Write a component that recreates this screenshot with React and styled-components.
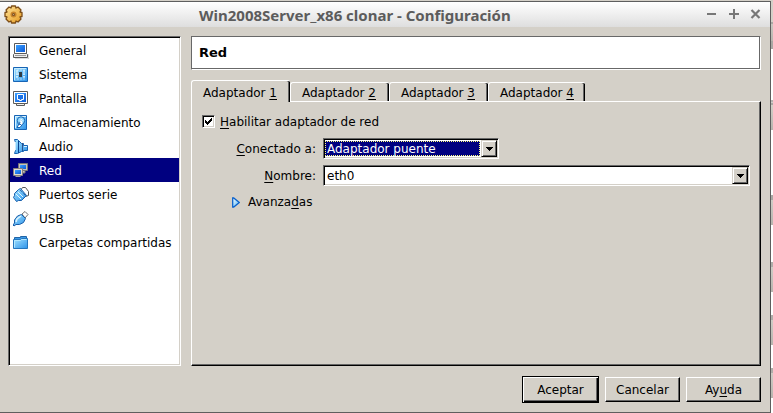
import React from "react";
import styled, { createGlobalStyle, css } from "styled-components";

const GlobalStyle = createGlobalStyle`
  * { box-sizing: border-box; }
  body {
    margin: 0;
    background: #d4d0c8;
    color: #000;
    font: 12px/16px "DejaVu Sans", sans-serif;
    overflow: hidden;
  }
`;

const FACE = "#d4d0c8";

const sunken = css`
  border: 1px solid;
  border-color: #686868 #fff #fff #686868;
  box-shadow: inset 1px 1px #000, inset -1px -1px ${FACE};
`;
const raised = css`
  border: 1px solid;
  border-color: #fff #000 #000 #fff;
  box-shadow: inset -1px -1px #666;
`;

const Desktop = styled.div`
  display: flex;
  width: 773px;
  height: 413px;
  padding-top: 1px;
`;
const Window = styled.main`
  display: flex;
  flex-direction: column;
  width: 771px;
  height: 412px;
  border: solid #5e5e5e;
  border-width: 1px 1px 1px 0;
  background: ${FACE};
`;
const Backdrop = styled.div`
  width: 2px;
  height: 412px;
  background: linear-gradient(
    #d4d0c8 0 21px, #aaa8a4 21px 23px, #cbc8c1 23px, #b9b5af 40px, #aaa8a4 40px 48px,
    #fff 48px 99px, #b5b3b0 99px 101px, #d0ceca 101px 102px, #aaa8a4 102px 104px, #d4d0c8 104px, #b8b4ae 129px,
    #fff 129px 194px, #aaa8a4 194px 199px, #d0cdc6 199px, #b8b4ae 224px,
    #fff 224px 261px, #b0aeaa 261px 266px, #d0cdc6 266px, #b8b4ae 291px,
    #fff 291px 314px, #b0aeaa 314px 319px, #d0cdc6 319px, #b8b4ae 344px,
    #fff 344px 367px, #b0aeaa 367px 372px, #d0cdc6 372px, #b8b4ae 397px,
    #fff 397px
  );
`;
const TitleBar = styled.header`
  display: flex;
  align-items: center;
  height: 25px;
  padding: 0 9px 0 4px;
  background: linear-gradient(#fff, #dedede);
`;
const Title = styled.h1`
  flex: 1;
  margin: 0 0 0 176px;
  color: #5c5c5c;
  font: bold 15px/22px "Noto Sans", sans-serif;
  white-space: nowrap;
`;
const TitleText = styled.span`
  display: inline-block;
  transform-origin: left center;
`;
const Columns = styled.div`
  display: flex;
  gap: 10px;
  padding: 9px 9px 0 8px;
`;
const Sidebar = styled.nav`
  ${sunken}
  width: 173px;
  height: 330px;
  padding: 1px;
  background: #fff;
`;
const NavItem = styled.div`
  display: flex;
  align-items: center;
  gap: 10px;
  height: 24px;
  padding: 1px 0 0 3px;
  white-space: nowrap;
  color: ${(p) => (p.$active ? "#fff" : "#000")};
  background: ${(p) => (p.$active ? "#000080" : "#fff")};
`;
const Icon = styled.svg`
  display: block;
  flex: none;
  margin-top: ${(p) => p.$lift || 0}px;
`;
const Content = styled.section`
  width: 570px;
`;
const PageHeading = styled.h2`
  height: 34px;
  margin: 0 0 10px;
  padding: 0 0 0 7px;
  border: 1px solid;
  border-color: #686868 #fff #fff #686868;
  box-shadow: inset -1px -1px #686868;
  background: #fff;
  font: bold 13px/32px "DejaVu Sans", sans-serif;
`;
const TabBar = styled.div`
  display: flex;
  align-items: flex-end;
  height: 21px;
`;
const Tab = styled.button`
  width: ${(p) => p.$width}px;
  height: ${(p) => (p.$active ? 22 : 19)}px;
  margin-bottom: ${(p) => (p.$active ? -1 : 0)}px;
  padding: ${(p) => (p.$active ? "3px 0 0 11px" : "1px 0 0 11px")};
  border: 0;
  border-top: 1px solid #fff;
  border-left: 1px solid #fff;
  border-radius: 3px 2px 0 0;
  box-shadow: inset -1px 0 #000, inset -2px 0 #666;
  background: ${FACE};
  font: inherit;
  text-align: left;
  white-space: nowrap;
  z-index: ${(p) => (p.$active ? 1 : 0)};
`;
const TabPane = styled.div`
  ${raised}
  height: 265px;
  padding: 11px 10px;
`;
const Key = styled.span`
  text-decoration: underline;
  text-decoration-thickness: 1px;
  text-decoration-skip-ink: none;
  text-underline-offset: 2px;
`;
const CheckRow = styled.label`
  display: flex;
  align-items: center;
  gap: 5px;
  height: 17px;
`;
const CheckBox = styled.span`
  ${sunken}
  width: 13px;
  height: 13px;
  padding: 1px;
  background: #fff;
`;
const FormRow = styled.div`
  display: flex;
  align-items: center;
  height: 21px;
  margin-top: ${(p) => p.$gap}px;
`;
const FieldLabel = styled.label`
  width: 121px;
  padding-right: 7px;
  text-align: right;
  white-space: nowrap;
`;
const Combo = styled.div`
  ${sunken}
  display: flex;
  width: ${(p) => p.$width}px;
  height: 21px;
  padding: 1px;
  background: #fff;
`;
const ComboValue = styled.span`
  flex: 1;
  height: 15px;
  margin: 1px 1px 1px 0;
  padding-left: 1px;
  border: 1px ${(p) => (p.$focused ? "dotted #ffff7f" : "solid transparent")};
  line-height: 15px;
  color: ${(p) => (p.$focused ? "#fff" : "#000")};
  background: ${(p) => (p.$focused ? "#000080" : "#fff")};
`;
const ComboArrow = styled.span`
  display: flex;
  align-items: center;
  justify-content: center;
  width: 16px;
  height: 17px;
  border: 1px solid;
  border-color: ${FACE} #000 #000 ${FACE};
  box-shadow: inset 1px 1px #fff, inset -1px -1px #666;
  background: ${FACE};
`;
const Expander = styled.div`
  display: flex;
  align-items: center;
  gap: 8px;
  margin: 8px 0 0 30px;
`;
const Footer = styled.footer`
  display: flex;
  justify-content: flex-end;
  align-items: center;
  gap: 6px;
  height: 27px;
  margin: 10px 9px 0 0;
`;
const Push = styled.button`
  ${raised}
  width: 75px;
  height: 25px;
  padding: 0;
  background: ${FACE};
  font: inherit;
  ${(p) =>
    p.$primary &&
    css`
      width: 77px;
      height: 27px;
      border-color: #000;
      box-shadow: inset 1px 1px #fff, inset -1px -1px #000, inset -2px -2px #666;
    `}
`;

const Blues = () => (
  <svg width="0" height="0" style={undefined} aria-hidden="true" display="none">
    <defs />
  </svg>
);

const Gradient = ({ id, from = "#8fd8ff", to = "#1466dc" }) => (
  <linearGradient id={id} x1="0" y1="0" x2="1" y2="1">
    <stop offset="0" stopColor={from} />
    <stop offset="1" stopColor={to} />
  </linearGradient>
);

const ICONS = {
  general: (
    <>
      <path d="M2 16h14v-5" stroke="#bbb" fill="none" />
      <path d="M1.5.5h12v10h-12z" fill="#fff" stroke="#5a5a5a" />
      <path d="M3 2h9v7H3z" fill="url(#g-general)" />
      <path d="M1.5 10.5h12l1 1v3H.5v-3z" fill="#eee" stroke="#5a5a5a" />
      <path d="M2 12.5h11" stroke="#999" />
    </>
  ),
  sistema: (
    <>
      <path d="M.5.5h14v14H.5z" fill="url(#g-sistema)" stroke="#1764b5" />
      <path d="M1.5 13V1.5H13" stroke="#c5ecff" fill="none" />
      <path d="M3 4h2m-2 3h3m-3 3h2m5-6h2m-2 3h2m-2 3h2M5 2.5v1m3-1v1m3-1v1m-6 8v1m3-1v1m3-1v1" stroke="#fff" />
      <path d="M6 5h3v5H6z" fill="#303a44" />
      <path d="M4 5v5m7-5v5" stroke="#e8f7ff" strokeDasharray="1 1" />
    </>
  ),
  pantalla: (
    <>
      <path d="M.5.5h14v12H.5z" fill="#fff" stroke="#5a5a5a" />
      <path d="M2 2h11v9H2z" fill="url(#g-pantalla)" />
      <path d="M4.5 3.5h6v5h-2v1h-2v-1h-2z" fill="#1870e6" stroke="#fff" />
      <path d="M3.5 12.5h8v2h-8z" fill="#eee" stroke="#5a5a5a" />
    </>
  ),
  almacenamiento: (
    <>
      <path d="M1.5.5h12v14h-12z" fill="url(#g-almacenamiento)" stroke="#1764b5" />
      <path d="M2.5 13V1.5H13" stroke="#d7f2ff" fill="none" />
      <circle cx="8" cy="5.5" r="3.7" fill="#9adcff" stroke="#1764b5" />
      <path d="M4.5 7.5Q5 10 8 9.5M8 5.5l-4 7h3l3-4" fill="#fff" stroke="#1764b5" />
      <path d="M7 5.5q2-2 2 0t-2 1" stroke="#fff" fill="none" />
    </>
  ),
  audio: (
    <>
      <path d="M1.5.5h3l4 4h2v2h4v5h-4v1h-2l-4 2h-3l1-3v-8z" fill="url(#g-audio)" stroke="#1764b5" />
      <path d="M5.5 2v12" stroke="#0a438e" />
      <path d="M2.5 3v8" stroke="#c7ebff" />
      <path d="M9.5 4v8" stroke="#28528d" />
      <path d="M11 7.5h3" stroke="#d8f3ff" />
    </>
  ),
  red: (
    <>
      <path d="M5.5.5h9v7h-9zM8 8v2h4V8" fill="#c7c1bb" stroke="#777" />
      <path d="M7 2h6v4H7z" fill="url(#g-red)" />
      <path d="M.5 5.5h9v7h-9z" fill="#e1dcd6" stroke="#85807c" />
      <path d="M2 7h6v4H2z" fill="url(#g-red)" />
      <path d="M2.5 13.5h5" stroke="#a39f9b" />
    </>
  ),
  serie: (
    <>
      <path d="M9.5.5h3l3 4v4l-3 1-5-6z" fill="#fff" stroke="#555" />
      <path d="M5.5 2.5l2-1 6 7-5 5h-3l-2 1-3-4 1-2v-2z" fill="url(#g-serie)" stroke="#195eaa" />
      <path d="M3 7l5 5M5 5l5 5" stroke="#e3f7ff" />
      <path d="M7 3l6 6" stroke="#174d8d" strokeDasharray="1 1" />
    </>
  ),
  usb: (
    <>
      <path d="M9 3l3-2.5 3 3-3 3.5z" fill="#fff" stroke="#737373" />
      <path d="M8.5 3.5l4 4-2 4-4 2H3l-2 1.5-1-1L1.500 12V9l3-4z" fill="url(#g-usb)" stroke="#195eaa" />
      <path d="M3 11l1-3 4-3" fill="none" stroke="#dcf4ff" strokeWidth="1.500" />
    </>
  ),
  carpetas: (
    <>
      <path d="M1.500 13.500V2.500h6v-1h6v12z" fill="#3b9ae8" stroke="#2264a6" />
      <path d="M.5 4.500h7l1-1h6v10H.5z" fill="url(#g-carpetas)" stroke="#2475bd" />
      <path d="M1.500 12.500v-7h6l1-1h5" fill="none" stroke="#b2e8ff" />
    </>
  ),
};

const NavIcon = ({ name }) => (
  <Icon width="16" height="16" viewBox="0 0 16 16" aria-hidden="true">
    <defs>
      <Gradient
        id={`g-${name}`}
        from={["general", "pantalla", "red"].includes(name) ? "#3ba0ff" : "#a5e4ff"}
        to={["general", "pantalla", "red"].includes(name) ? "#0c5ad8" : "#2c92ea"}
      />
    </defs>
    {ICONS[name]}
  </Icon>
);

const Gear = () => (
  <Icon width="19" height="19" viewBox="0 0 19 19" aria-hidden="true" $lift={-1}>
    <defs>
      <Gradient id="gold" from="#ffe49a" to="#e59a20" />
    </defs>
    <path
      d="M7.500 1h4l.5 2 2-1 3 3-1 2 2 .5v4l-2 .5 1 2-3 3-2-1-.5 2h-4l-.5-2-2 1-3-3 1-2-2-.5v-4l2-.5-1-2 3-3 2 1z"
      fill="url(#gold)"
      stroke="#7d4d16"
      strokeWidth="1.300"
      strokeLinejoin="round"
    />
    <circle cx="9.500" cy="9.500" r="3" fill="#c8842a" />
    <circle cx="9.500" cy="9.500" r="1.500" fill="#7b522a" />
    <circle cx="9.500" cy="9.500" r=".6" fill="#d9b475" />
  </Icon>
);

const WindowControls = () => (
  <Icon width="55" height="12" viewBox="0 0 55 12" fill="none" stroke="#777" strokeWidth="2" $lift={-1}>
    <path d="M1 6h9M23 6h10M28 1v10" />
    <path d="M45.500 2l8 8m0-8l-8 8" strokeWidth="2.200" />
  </Icon>
);

const ArrowDown = () => (
  <Icon width="7" height="4" shapeRendering="crispEdges">
    <path d="M0 0h7v1H0zM1 1h5v1H1zM2 2h3v1H2zM3 3h1v1H3z" />
  </Icon>
);

const NAV = [
  ["general", "General"],
  ["sistema", "Sistema"],
  ["pantalla", "Pantalla"],
  ["almacenamiento", "Almacenamiento"],
  ["audio", "Audio"],
  ["red", "Red"],
  ["serie", "Puertos serie"],
  ["usb", "USB"],
  ["carpetas", "Carpetas compartidas"],
];

export default function App() {
  return (
    <>
      <GlobalStyle />
      <Desktop>
        <Window>
          <TitleBar>
            <Gear />
            <Title>
              <TitleText>Win2008Server_x86 clonar - Configuración</TitleText>
            </Title>
            <WindowControls />
          </TitleBar>
          <Columns>
            <Sidebar>
              {NAV.map(([id, label]) => (
                <NavItem key={id} $active={id === "red"}>
                  <NavIcon name={id} />
                  {label}
                </NavItem>
              ))}
            </Sidebar>
            <Content>
              <PageHeading>Red</PageHeading>
              <TabBar>
                {[99, 99, 99, 97].map((width, i) => (
                  <Tab key={i} $active={i === 0} $width={width}>
                    Adaptador <Key>{i + 1}</Key>
                  </Tab>
                ))}
              </TabBar>
              <TabPane>
                <CheckRow>
                  <CheckBox>
                    <Icon width="9" height="9" shapeRendering="crispEdges">
                      <path d="M1 3h1v1h1v1h1v-1h1v-1h1v-1h1v-1h1v3h-1v1h-1v1h-1v1h-1v1h-1v-1h-1v-1h-1z" />
                    </Icon>
                  </CheckBox>
                  <span>
                    <Key>H</Key>abilitar adaptador de red
                  </span>
                </CheckRow>
                <FormRow $gap={8}>
                  <FieldLabel>
                    <Key>C</Key>onectado a:
                  </FieldLabel>
                  <Combo $width={176}>
                    <ComboValue $focused>Adaptador puente</ComboValue>
                    <ComboArrow>
                      <ArrowDown />
                    </ComboArrow>
                  </Combo>
                </FormRow>
                <FormRow $gap={6}>
                  <FieldLabel>
                    <Key>N</Key>ombre:
                  </FieldLabel>
                  <Combo $width={427}>
                    <ComboValue>eth0</ComboValue>
                    <ComboArrow>
                      <ArrowDown />
                    </ComboArrow>
                  </Combo>
                </FormRow>
                <Expander>
                  <Icon width="8" height="11" viewBox="0 0 8 11">
                    <defs>
                      <Gradient id="expand" from="#fff" to="#4db8f5" />
                    </defs>
                    <path d="M.7 1v9h1L7.300 5.500 1.700 1z" fill="url(#expand)" stroke="#0b62cc" strokeWidth="1.300" />
                  </Icon>
                  <span>
                    Avanza<Key>d</Key>as
                  </span>
                </Expander>
              </TabPane>
            </Content>
          </Columns>
          <Footer>
            <Push $primary>Aceptar</Push>
            <Push>Cancelar</Push>
            <Push>
              Ay<Key>u</Key>da
            </Push>
          </Footer>
        </Window>
        <Backdrop />
      </Desktop>
    </>
  );
}
